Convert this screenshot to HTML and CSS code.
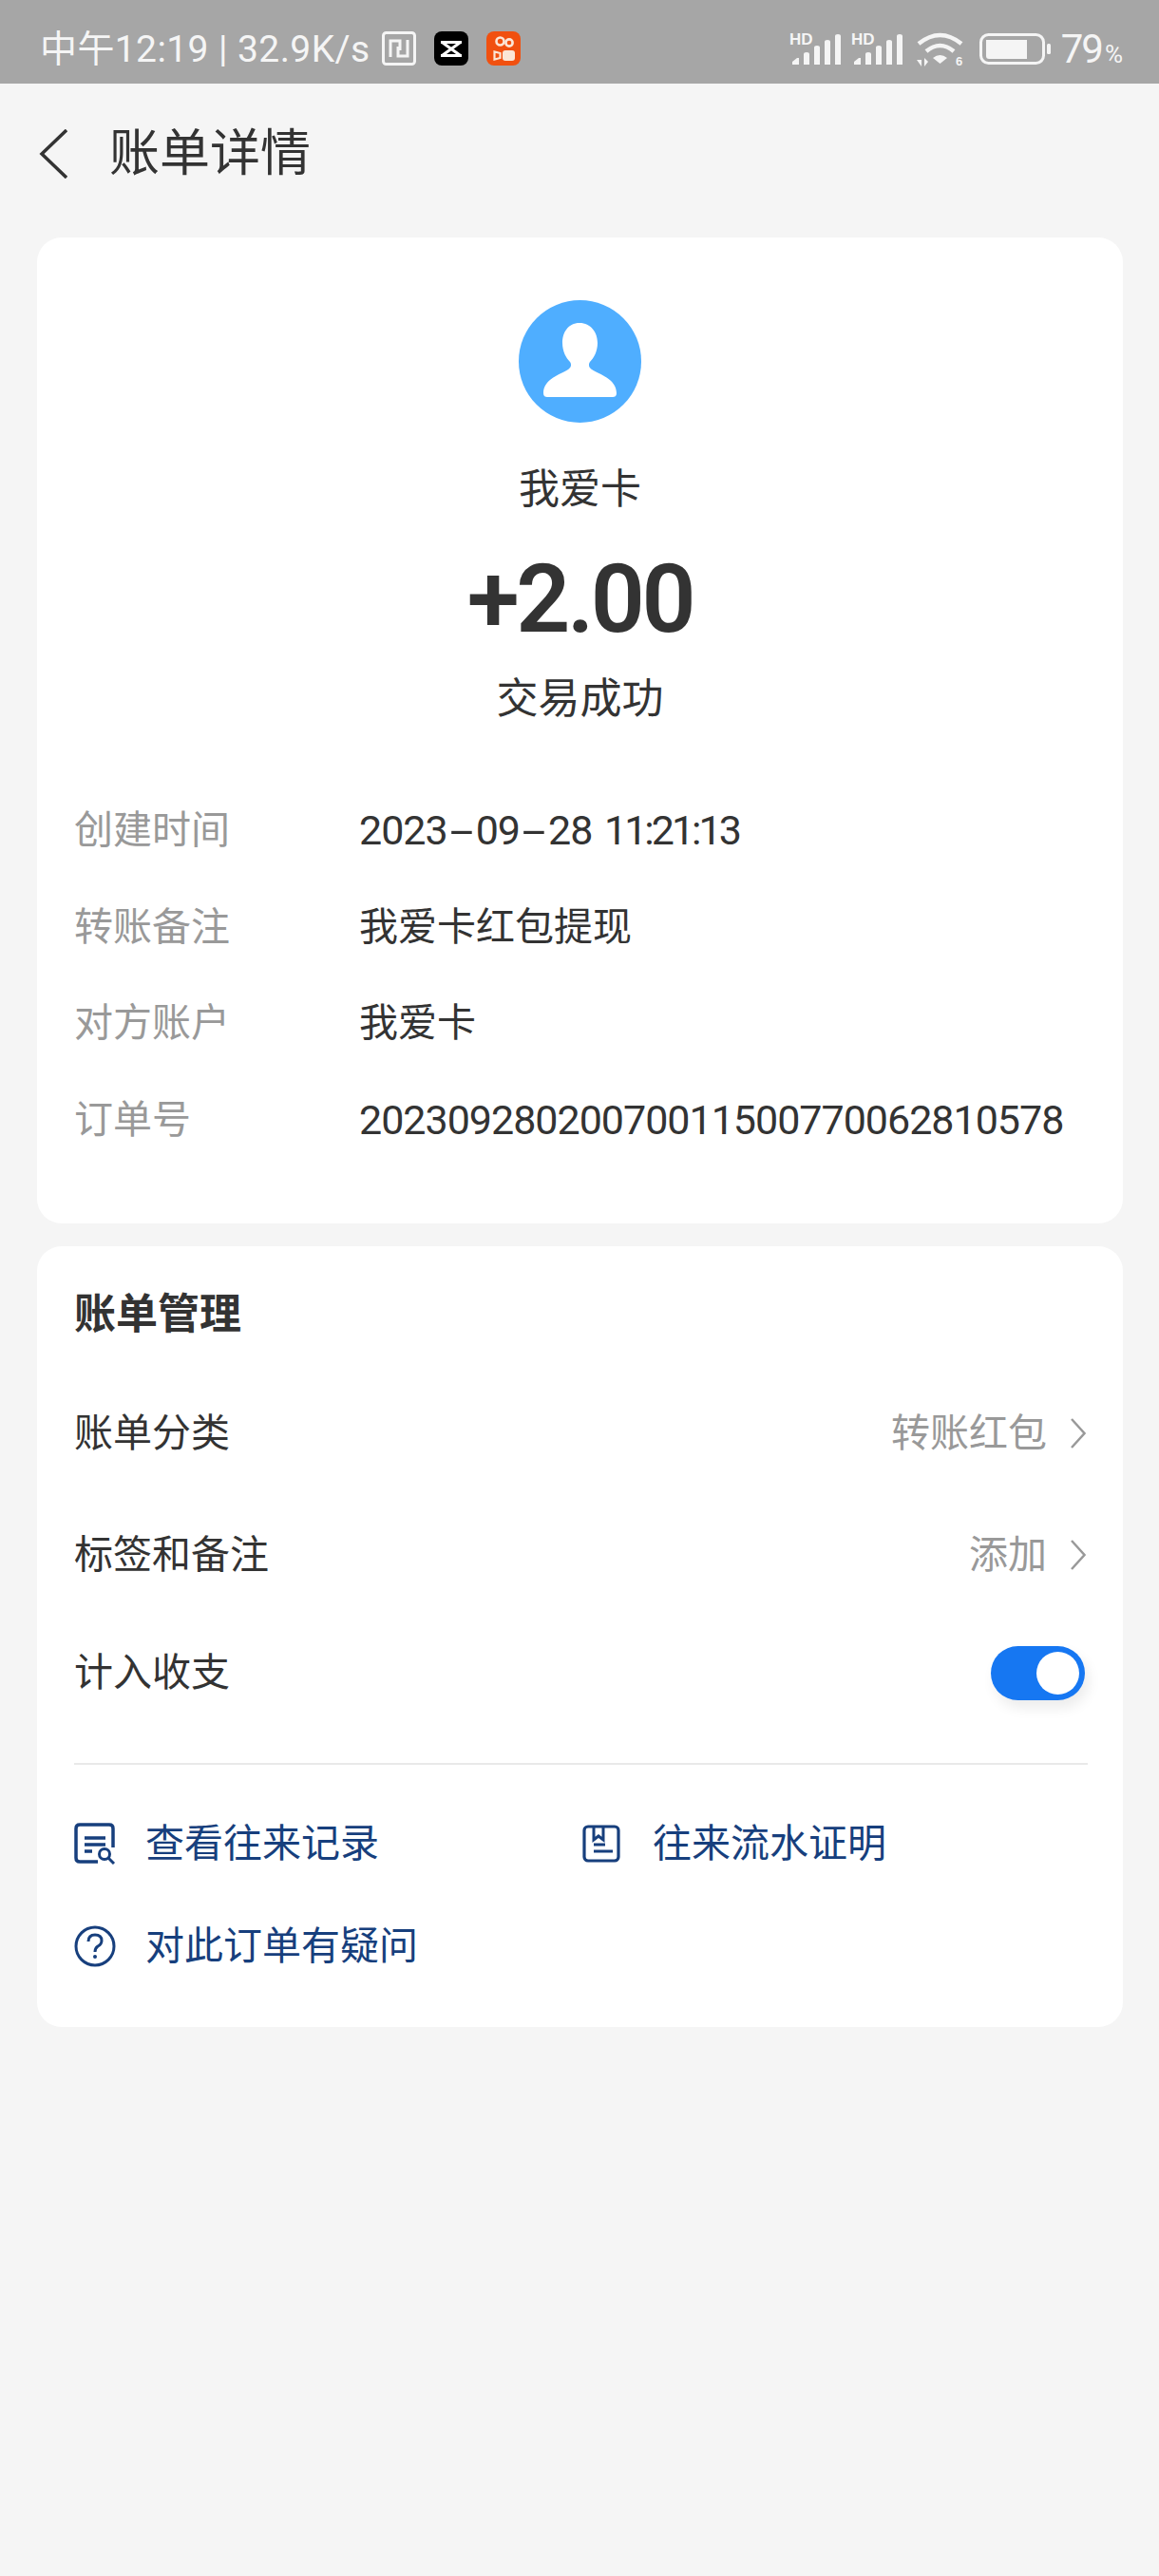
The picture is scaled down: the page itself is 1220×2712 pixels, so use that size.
FILE: index.html
```html
<!DOCTYPE html>
<html lang="zh-CN">
<head>
<meta charset="utf-8">
<title>账单详情</title>
<link rel="stylesheet" href="styles.css">
</head>
<body>
<div class="page">
  <header class="status">
    <div class="status-left">
      <span class="status-text">中午12:19 | 32.9K/s</span>
      <svg class="ic-nfc" width="36" height="36" viewBox="0 0 36 36"><rect x="1.500" y="1.500" width="33" height="33" rx="3" fill="none" stroke="#f5f5f5" stroke-width="3"/><path d="M9 27V10h10v10M27 9v17H17v-10" fill="none" stroke="#f5f5f5" stroke-width="3"/></svg>
      <svg class="ic-cap" width="36" height="36" viewBox="0 0 36 36"><rect width="36" height="36" rx="8" fill="#000"/><path d="M7 11.500h22M7 25.500h22M9 12l18 13M27 12L9 25" fill="none" stroke="#fff" stroke-width="3"/></svg>
      <svg class="ic-kwai" width="36" height="36" viewBox="0 0 36 36"><rect width="36" height="36" rx="8" fill="#f1500f"/><circle cx="14.500" cy="10.500" r="4" fill="none" stroke="#fbe6d6" stroke-width="2.600"/><circle cx="24" cy="12" r="3.600" fill="none" stroke="#fbe6d6" stroke-width="2.600"/><rect x="17" y="20" width="13" height="11" rx="3" fill="#fbe6d6"/><path d="M14.500 23l-6-1.500v8l6-1.500z" fill="none" stroke="#fbe6d6" stroke-width="2.200"/></svg>
    </div>
    <div class="status-right">
      <svg class="ic-sig" width="55" height="36" viewBox="0 0 55 36"><text x="0" y="14" class="hd">HD</text><path d="M3 35v-3l5-4h2v7zM15 35V24q0-2 3-2t3 2v11zM26 35V17q0-2 3-2t3 2v18zM37 35V11q0-2 3-2t3 2v24zM48 35V5q0-2 3-2t3 2v30z" fill="#f5f5f5"/></svg>
      <svg class="ic-sig" width="55" height="36" viewBox="0 0 55 36"><text x="0" y="14" class="hd">HD</text><path d="M3 35v-3l5-4h2v7zM15 35V24q0-2 3-2t3 2v11zM26 35V17q0-2 3-2t3 2v18zM37 35V11q0-2 3-2t3 2v24zM48 35V5q0-2 3-2t3 2v30z" fill="#f5f5f5"/></svg>
      <svg class="ic-wifi" width="49" height="38" viewBox="0 0 49 38"><g fill="none" stroke="#f5f5f5" stroke-width="4.500"><path d="M2 13Q24.500-5 47 13"/><path d="M10 21q14.500-12 29 0"/></g><path d="M17 28q7.500-6 15 0l-7.500 6z" fill="#f5f5f5"/><text x="41" y="36" class="six">6</text><path d="M0 30h5v7zM8 37v-9l4 4z" fill="#f5f5f5"/></svg>
      <svg class="ic-batt" width="75" height="33" viewBox="0 0 75 33"><rect x="1.500" y="1.500" width="66" height="30" rx="8" fill="none" stroke="#f5f5f5" stroke-width="3"/><path d="M7 7h43v20H10q-3 0-3-3z" fill="#f5f5f5"/><rect x="71" y="11" width="4" height="11" rx="1.500" fill="#f5f5f5"/></svg>
      <span class="batt-text">79<small class="pct">%</small></span>
    </div>
  </header>

  <nav class="nav">
    <svg class="back" width="30" height="52" viewBox="0 0 30 52"><path d="M29 1L3 26l26 25" fill="none" stroke="#333" stroke-width="3.500"/></svg>
    <h1 class="nav-title">账单详情</h1>
  </nav>

  <main class="content">
    <section class="card summary">
      <svg class="avatar" width="129" height="129" viewBox="0 0 129 129"><circle cx="64.500" cy="64.500" r="64.500" fill="#4faeff"/><path d="M64 24c-12 0-18 10-18 21 0 9 4 16 8 20 2 3 1 6-2 8-8 5-26 10-26 25 0 3 2 4 4 4h69c2 0 4-1 4-4 0-15-18-20-26-25-3-2-4-5-2-8 4-4 8-11 8-20 0-11-7-21-19-21z" fill="#fff"/></svg>
      <div class="payee">我爱卡</div>
      <div class="amount">+2.00</div>
      <div class="state">交易成功</div>
      <dl class="details">
        <div class="detail"><dt>创建时间</dt><dd class="num">2023<span class="dash">-</span>09<span class="dash">-</span>28 <span class="time">11:21:13</span></dd></div>
        <div class="detail"><dt>转账备注</dt><dd>我爱卡红包提现</dd></div>
        <div class="detail"><dt>对方账户</dt><dd>我爱卡</dd></div>
        <div class="detail"><dt>订单号</dt><dd class="num">20230928020070011500770062810578</dd></div>
      </dl>
    </section>

    <section class="card manage">
      <h2 class="manage-title">账单管理</h2>
      <div class="row row-a"><span>账单分类</span><span class="row-value">转账红包<svg class="chev" width="16" height="32" viewBox="0 0 16 32"><path d="M1 1l13.500 15L1 31" fill="none" stroke="#999" stroke-width="2.500"/></svg></span></div>
      <div class="row row-b"><span>标签和备注</span><span class="row-value">添加<svg class="chev" width="16" height="32" viewBox="0 0 16 32"><path d="M1 1l13.500 15L1 31" fill="none" stroke="#999" stroke-width="2.500"/></svg></span></div>
      <div class="row row-c"><span>计入收支</span><span class="toggle"><span class="knob"></span></span></div>
      <div class="links">
        <a class="link">
          <svg width="44" height="44" viewBox="0 0 44 44"><path d="M25 41H6q-4 0-4-4V6q0-4 4-4h31q4 0 4 4v20" fill="none" stroke="#173f7d" stroke-width="3.500"/><path d="M11 16h22M11 23h22M11 30h8" stroke="#173f7d" stroke-width="3.500"/><circle cx="32" cy="33" r="5.500" fill="none" stroke="#173f7d" stroke-width="3"/><path d="M36 37l6 6" stroke="#173f7d" stroke-width="3"/></svg>
          <span>查看往来记录</span>
        </a>
        <a class="link link-second">
          <svg width="40" height="40" viewBox="0 0 40 40"><rect x="2" y="2" width="36" height="36" rx="4" fill="none" stroke="#173f7d" stroke-width="3.200"/><path d="M12 2v14l5-4 5 4V2M12 21h12M12 28h20" fill="none" stroke="#173f7d" stroke-width="3"/></svg>
          <span>往来流水证明</span>
        </a>
        <a class="link">
          <svg width="44" height="44" viewBox="0 0 44 44"><circle cx="22" cy="22" r="20" fill="none" stroke="#173f7d" stroke-width="3"/><path d="M15 17q0-7 7-7t7 6q0 4-4 6-3 2-3 6" fill="none" stroke="#173f7d" stroke-width="3"/><circle cx="22" cy="33" r="2" fill="#173f7d"/></svg>
          <span>对此订单有疑问</span>
        </a>
      </div>
    </section>
  </main>
</div>
</body>
</html>
```
FILE: styles.css
```css
* { box-sizing: border-box; }
html, body { margin: 0; padding: 0; }
body {
  background: #f5f5f5;
  color: #333;
  font-family: Roboto, "Noto Sans CJK SC", sans-serif;
}
.page { width: 1220px; height: 2712px; overflow: hidden; }

.status {
  height: 88px;
  background: #a6a6a6;
  color: #f5f5f5;
  display: flex;
  justify-content: space-between;
  align-items: flex-start;
  padding: 33px 38px 0 42px;
}
.status-left { display: flex; align-items: flex-start; height: 38px; }
.status-right { display: flex; align-items: flex-start; height: 38px; }
.status-text { width: 360px; flex: none; font-size: 39px; line-height: 38px; font-weight: 400; letter-spacing: .4px; white-space: nowrap; }
.status-left svg { flex: none; }
.ic-cap { margin-left: 19px; }
.ic-kwai { margin-left: 19px; }
.status-right svg { flex: none; }
.ic-sig { margin-right: 10px; }
.ic-wifi { margin: 0 17px 0 4px; }
.ic-batt { margin: 2px 11px 0 0; }
.hd { font: 700 17px "Liberation Sans", sans-serif; fill: #f5f5f5; }
.six { font: 700 13px "Liberation Sans", sans-serif; fill: #f5f5f5; }
.batt-text { font-size: 42px; line-height: 38px; font-weight: 400; letter-spacing: -2px; white-space: nowrap; }
.pct { font-size: 26px; letter-spacing: 0; margin-left: 3px; }

.nav { height: 162px; padding: 0 0 15px 41px; display: flex; align-items: center; }
.nav-title { margin: 0 0 0 44px; font-size: 53px; line-height: 70px; font-weight: 400; color: #333; }

.content { padding: 0 38px 0 39px; display: flex; flex-direction: column; gap: 24px; }
.card { background: #fff; border-radius: 26px; }

.summary { height: 1038px; padding-top: 66px; display: flex; flex-direction: column; align-items: center; }
.avatar { flex: none; }
.payee { margin-top: 41px; font-size: 43px; line-height: 58px; }
.amount { margin-top: 32px; font-size: 100px; line-height: 110px; font-weight: 600; letter-spacing: -3.500px; color: #333; }
.state { margin-top: 20px; font-size: 44px; line-height: 60px; }

.details { align-self: stretch; margin: 78px 0 0; padding: 0 39px; display: flex; flex-direction: column; gap: 41.500px; }
.detail { display: flex; align-items: center; height: 60px; }
.detail dt { width: 300px; flex: none; font-size: 41px; line-height: 60px; color: #999; }
.detail dd { margin: 0; font-size: 41px; line-height: 60px; color: #333; white-space: nowrap; }
.detail .num { font-size: 43px; letter-spacing: -1px; word-spacing: 3px; }
.dash { display: inline-block; width: 30px; text-align: center; letter-spacing: 0; transform: scaleX(2.100); }
.time { letter-spacing: -3px; }

.manage { height: 822px; padding: 42px 39px 0; }
.manage-title { margin: 0; font-size: 44px; line-height: 60px; font-weight: 700; }
.row { display: flex; justify-content: space-between; align-items: center; height: 60px; font-size: 41px; line-height: 60px; }
.row-a { margin-top: 65px; }
.row-b { margin-top: 68px; }
.row-c { margin-top: 64px; }
.row-value { display: flex; align-items: center; color: #999; }
.chev { margin-left: 25px; }
.toggle {
  width: 99px; height: 57px; border-radius: 29px; background: #1677f2;
  display: flex; align-items: center; justify-content: flex-end; padding-right: 6px;
  margin-right: 1px;
  box-shadow: 4px 8px 14px rgba(0, 0, 0, .08);
}
.knob { width: 45px; height: 45px; border-radius: 50%; background: #fff; }

.links {
  margin-top: 65px;
  border-top: 2px solid #e9e9e9;
  padding-top: 53px;
  display: grid;
  grid-template-columns: 535px 1fr;
  row-gap: 48px;
  margin-right: -2px;
}
.link { display: flex; align-items: center; height: 60px; font-size: 41px; line-height: 60px; color: #173f7d; }
.link svg { flex: none; margin-right: 31px; }
.link-second svg { margin-right: 34px; }
```
